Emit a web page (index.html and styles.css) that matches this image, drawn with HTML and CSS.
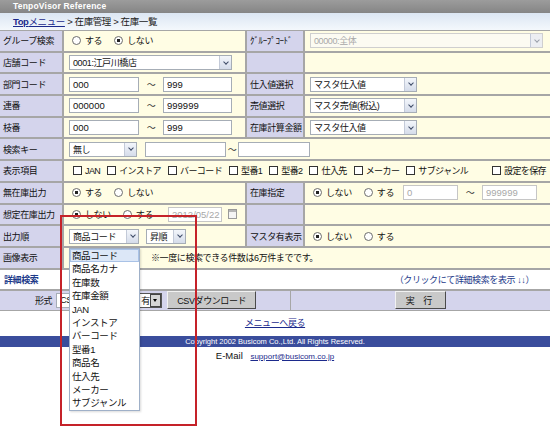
FILE: index.html
```html
<!DOCTYPE html>
<html lang="ja">
<head>
  <meta charset="UTF-8" />
  <title>TenpoVisor Reference - 在庫一覧</title>
  <link rel="stylesheet" href="styles.css">
</head>
<body>
  <div class="titlebar">TenpoVisor Reference</div>
  <div class="crumb"><a class="top" href="#"><b>Top</b>メニュー</a> &gt; 在庫管理 &gt; 在庫一覧</div>

  <div class="form">
    <div class="lbl">グループ検索</div>
    <div class="val">
      <span class="rd"><i></i>する</span>
      <span class="rd"><i class="on"></i>しない</span>
    </div>
    <div class="lbl">ｸﾞﾙｰﾌﾟｺｰﾄﾞ</div>
    <div class="val"><span class="sel off w-group">00000:全体<span class="arr"></span></span></div>

    <div class="lbl">店舗コード</div>
    <div class="val"><span class="sel w-shop">0001:江戸川橋店<span class="arr"></span></span></div>
    <div class="lbl"></div>
    <div class="val"></div>

    <div class="lbl">部門コード</div>
    <div class="val"><span class="inp w70">000</span><span class="tl">～</span><span class="inp w69">999</span></div>
    <div class="lbl">仕入値選択</div>
    <div class="val"><span class="sel w106">マスタ仕入値<span class="arr"></span></span></div>

    <div class="lbl">連番</div>
    <div class="val"><span class="inp w70">000000</span><span class="tl">～</span><span class="inp w69">999999</span></div>
    <div class="lbl">売値選択</div>
    <div class="val"><span class="sel w106">マスタ売値(税込)<span class="arr"></span></span></div>

    <div class="lbl">枝番</div>
    <div class="val"><span class="inp w70">000</span><span class="tl">～</span><span class="inp w69">999</span></div>
    <div class="lbl">在庫計算金額</div>
    <div class="val"><span class="sel w106">マスタ仕入値<span class="arr"></span></span></div>

    <div class="lbl">検索キー</div>
    <div class="val wide">
      <span class="sel w68">無し<span class="arr"></span></span>
      <span class="inp key1"></span><span class="tl narrow">～</span><span class="inp key2"></span>
    </div>

    <div class="lbl">表示項目</div>
    <div class="val wide checks">
      <span class="ck"><i></i>JAN</span>
      <span class="ck"><i></i>インストア</span>
      <span class="ck"><i></i>バーコード</span>
      <span class="ck"><i></i>型番1</span>
      <span class="ck"><i></i>型番2</span>
      <span class="ck"><i></i>仕入先</span>
      <span class="ck"><i></i>メーカー</span>
      <span class="ck"><i></i>サブジャンル</span>
      <span class="ck save"><i></i>設定を保存</span>
    </div>

    <div class="lbl">無在庫出力</div>
    <div class="val">
      <span class="rd"><i class="on"></i>する</span>
      <span class="rd"><i></i>しない</span>
    </div>
    <div class="lbl">在庫指定</div>
    <div class="val">
      <span class="rd"><i class="on"></i>しない</span>
      <span class="rd"><i></i>する</span>
      <span class="inp off w55">0</span><span class="tl">～</span><span class="inp off w55">999999</span>
    </div>

    <div class="lbl">想定在庫出力</div>
    <div class="val">
      <span class="rd"><i class="on"></i>しない</span>
      <span class="rd"><i></i>する</span>
      <span class="inp off w54 date">2012/05/22</span><span class="cal"></span>
    </div>
    <div class="lbl"></div>
    <div class="val"></div>

    <div class="lbl">出力順</div>
    <div class="val">
      <span class="sel w70">商品コード<span class="arr"></span></span>
      <span class="sel w40 order">昇順<span class="arr"></span></span>
    </div>
    <div class="lbl">マスタ有表示</div>
    <div class="val">
      <span class="rd"><i class="on"></i>しない</span>
      <span class="rd"><i></i>する</span>
    </div>

    <div class="lbl">画像表示</div>
    <div class="val wide"><span class="note">※一度に検索できる件数は6万件までです。</span></div>
  </div>

  <div class="detail">
    <b>詳細検索</b>
    <span>（クリックにて詳細検索を表示 ↓↓）</span>
  </div>

  <div class="export">
    <div class="cell">
      <span class="fmt">形式</span>
      <span class="sel w45">CSV<span class="arr"></span></span>
      <span class="sel classic">有<span class="arr"></span></span>
      <span class="btn csv">CSVダウンロード</span>
    </div>
    <div class="cell center">
      <span class="btn run">実 行</span>
    </div>
  </div>

  <div class="back"><a href="#">メニューへ戻る</a></div>
  <div class="copy">Copyright 2002 Busicom Co.,Ltd. All Rights Reserved.</div>
  <div class="mail">E-Mail <a href="#">support@busicom.co.jp</a></div>

  <ul class="dropdown">
    <li class="hl">商品コード</li>
    <li>商品名カナ</li>
    <li>在庫数</li>
    <li>在庫金額</li>
    <li>JAN</li>
    <li>インストア</li>
    <li>バーコード</li>
    <li>型番1</li>
    <li>商品名</li>
    <li>仕入先</li>
    <li>メーカー</li>
    <li>サブジャンル</li>
  </ul>

  <div class="redframe"></div>
</body>
</html>
```

FILE: styles.css
```css
body {
  margin: 0;
  width: 550px;
  height: 430px;
  overflow: hidden;
  position: relative;
  font-family: "Liberation Sans", "Noto Sans CJK JP", sans-serif;
  font-size: 9px;
  letter-spacing: -0.4px;
  color: #111;
  background: #fff;
}
a {
  color: #1c2a8c;
}
.titlebar {
  height: 13px;
  line-height: 13px;
  padding-left: 13px;
  background: linear-gradient(#9c9c9c, #858585);
  color: #fff;
  font-weight: bold;
  font-size: 8.5px;
  letter-spacing: 0.2px;
}
.crumb {
  height: 17px;
  line-height: 17px;
  padding-left: 13px;
  background: linear-gradient(#dbe6f3, #f4f8fc);
  color: #222;
  font-size: 9.5px;
}
.crumb .top {
  color: #1c2a8c;
}

/* main search form */
.form {
  display: grid;
  grid-template-columns: 62px 181px 56px minmax(0, 1fr);
  grid-auto-rows: 19.7px;
  gap: 2px;
  padding: 1px 0 2px;
  background: #a6a6a6;
}
.lbl {
  display: flex;
  align-items: center;
  padding-left: 3px;
  background: #d4d4ec;
  white-space: nowrap;
}
.val {
  display: flex;
  align-items: center;
  min-width: 0;
  padding-left: 5px;
  background: #fffde4;
  white-space: nowrap;
}
.wide {
  grid-column: span 3;
}

.rd {
  display: inline-flex;
  align-items: center;
  margin-left: 3px;
  margin-right: 9px;
}
.rd i {
  width: 7px;
  height: 7px;
  border: 1px solid #6d6d6d;
  border-radius: 50%;
  background: #fff;
  margin-right: 4px;
}
.rd i.on {
  background: radial-gradient(circle, #222 0 1.5px, #fff 2px);
}
.checks {
  padding-left: 9px;
  letter-spacing: -0.6px;
}
.ck {
  display: inline-flex;
  align-items: center;
  margin-right: 7px;
}
.ck i {
  width: 7px;
  height: 7px;
  border: 1px solid #333;
  background: #fff;
  margin-right: 3px;
}
.ck.save {
  margin-left: auto;
  margin-right: 4px;
}

.inp, .sel {
  display: inline-flex;
  align-items: center;
  flex: none;
  box-sizing: border-box;
  height: 15px;
  border: 1px solid #a6adb6;
  background: #fff;
  padding-left: 3px;
  overflow: hidden;
}
.inp {
  font-size: 9.5px;
  letter-spacing: 0;
}
.inp.off {
  color: #a8a8a8;
  border-color: #c6c6c6;
}
.sel .arr {
  margin-left: auto;
  width: 11px;
  height: 13px;
  flex: none;
  display: flex;
  align-items: center;
  justify-content: center;
  background: linear-gradient(#f3f6fb, #d5dcea);
  border-left: 1px solid #c3cad8;
}
.sel .arr::after {
  content: "";
  width: 3px;
  height: 3px;
  margin-top: -2px;
  border-right: 1.5px solid #3d4a66;
  border-bottom: 1.5px solid #3d4a66;
  transform: rotate(45deg);
}
.sel.off {
  color: #a8a8a8;
  background: #fcfbf2;
  border-color: #cfcfcf;
}
.sel.off .arr {
  background: #eceef2;
}
.sel.off .arr::after {
  border-color: #9aa0aa;
}
.tl {
  width: 24px;
  flex: none;
  text-align: center;
  color: #333;
}
.tl.narrow {
  width: 12px;
}

.w-group { width: 233px; }
.w-shop { width: 163px; }
.w106 { width: 107px; }
.w70 { width: 70px; }
.w69 { width: 69px; }
.w68 { width: 68px; }
.w55 { width: 55px; }
.w54 { width: 54px; }
.w45 { width: 45px; }
.w40 { width: 40px; }
.key1 { width: 81px; margin-left: 8px; }
.key2 { width: 72px; }
.date { margin-left: 6px; }
.order { margin-left: 7px; }
.cal {
  width: 9px;
  height: 10px;
  margin-left: 6px;
  box-sizing: border-box;
  border: 1px solid #9a9a9a;
  background: linear-gradient(#b5b5b5 0 2px, #f4f4f4 2px);
}
.note {
  margin-left: 82px;
}

.detail {
  height: 19px;
  display: flex;
  align-items: center;
  justify-content: space-between;
  padding: 0 16px 0 4px;
  background: #fff;
  border-bottom: 2px solid #a6a6a6;
  color: #1d3a8a;
}
.export {
  display: grid;
  grid-template-columns: 290px 1fr;
  gap: 1px;
  height: 19px;
  background: #a6a6a6;
  border-bottom: 1px solid #a6a6a6;
}
.export .cell {
  display: flex;
  align-items: center;
  background: #d4d4ec;
}
.export .cell.center {
  justify-content: center;
}
.fmt {
  margin-left: 35px;
  margin-right: 4px;
}
.sel.classic {
  width: 23px;
  margin-left: 38px;
  border-color: #555;
  padding-left: 1px;
}
.sel.classic .arr {
  width: 9px;
  height: 11px;
  margin-right: 1px;
  background: #d6d6d6;
  border: 1px solid #444;
}
.sel.classic .arr::after {
  width: 0;
  height: 0;
  margin-top: 1px;
  border: 2.5px solid transparent;
  border-top: 3px solid #000;
  border-bottom: 0;
  transform: none;
}
.btn {
  display: inline-flex;
  align-items: center;
  justify-content: center;
  box-sizing: border-box;
  height: 18px;
  background: #c9c9c9;
  border: 1px solid #f2f2f2;
  border-right-color: #4a4a4a;
  border-bottom-color: #4a4a4a;
  color: #111;
}
.btn.csv {
  width: 89px;
  margin-left: 5px;
}
.btn.run {
  width: 51px;
  letter-spacing: 3px;
}

.back {
  margin-top: 6px;
  line-height: 12px;
  text-align: center;
}
.copy {
  margin-top: 7px;
  height: 11px;
  line-height: 11px;
  background: #3a4d9c;
  color: #fff;
  font-size: 7.5px;
  letter-spacing: 0;
  text-align: center;
}
.mail {
  margin-top: 3px;
  line-height: 12px;
  text-align: center;
  font-size: 9.5px;
  letter-spacing: 0;
}
.mail a {
  margin-left: 5px;
  font-size: 8px;
}

/* open 出力順 list */
.dropdown {
  position: absolute;
  left: 69px;
  top: 248px;
  width: 71px;
  margin: 0;
  padding: 0;
  list-style: none;
  box-sizing: border-box;
  background: #fff;
  border: 1px solid #9fb0c8;
  box-shadow: 1px 1px 2px rgba(0, 0, 0, 0.15);
}
.dropdown li {
  height: 13.4px;
  line-height: 13.4px;
  padding-left: 2px;
  font-size: 9.5px;
  white-space: nowrap;
}
.dropdown li.hl {
  background: #dce7f7;
  outline: 1px solid #a9c2e6;
  outline-offset: -1px;
}

/* annotation */
.redframe {
  position: absolute;
  left: 60px;
  top: 215px;
  width: 137px;
  height: 211px;
  box-sizing: border-box;
  border: 2px solid #c52229;
}
```
